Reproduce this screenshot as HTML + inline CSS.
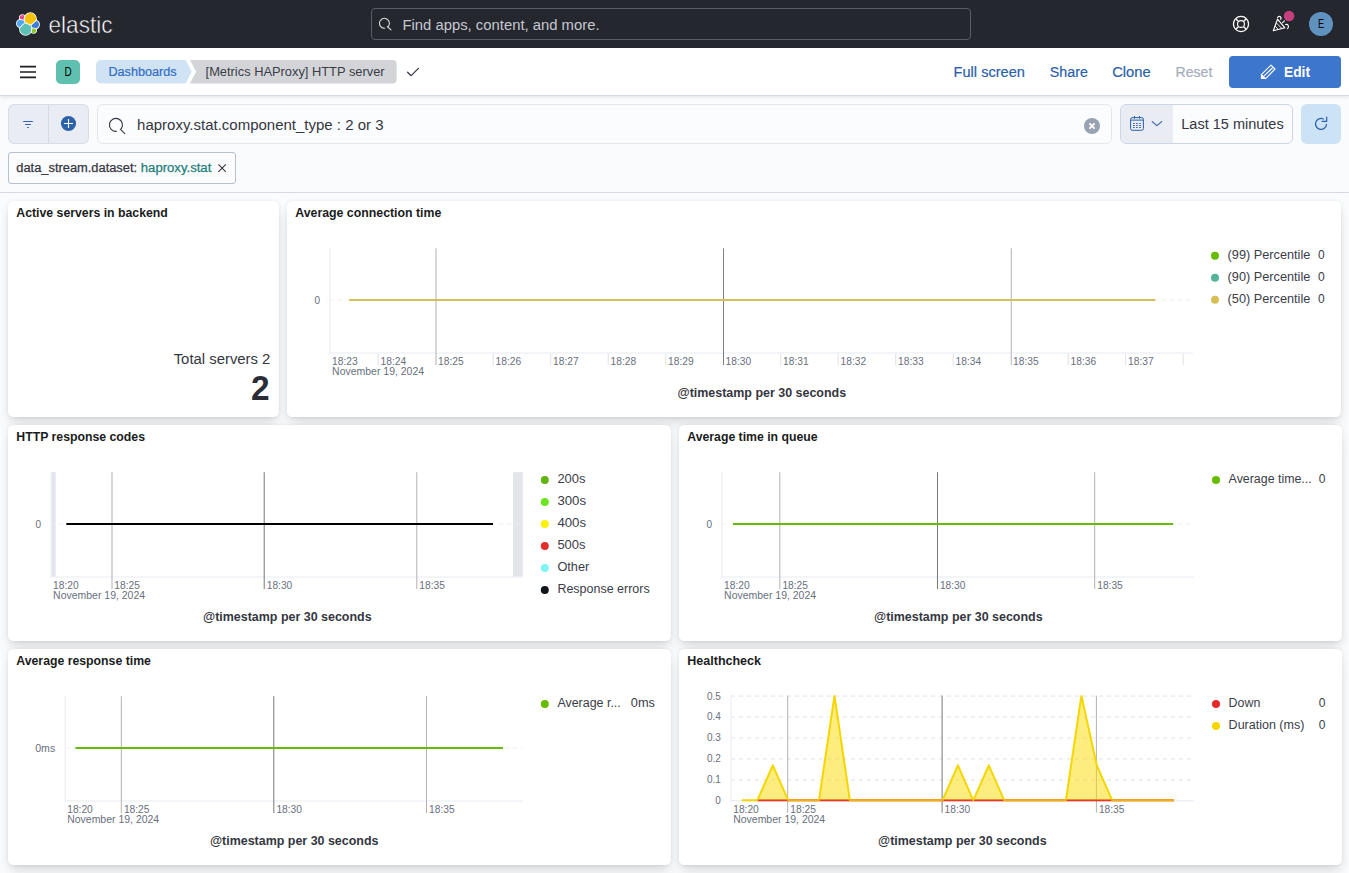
<!DOCTYPE html>
<html lang="en">
<head>
<meta charset="utf-8">
<title>[Metrics HAProxy] HTTP server - Elastic</title>
<style>
*{box-sizing:border-box;margin:0;padding:0}
html,body{width:1349px;height:873px;overflow:hidden}
body{font-family:"Liberation Sans",sans-serif;background:#fafbfd;color:#343741;position:relative}
.abs{position:absolute}
.t{position:absolute;white-space:nowrap;line-height:1}
/* top dark bar */
#top{left:0;top:0;width:1349px;height:48px;background:#25272f}
#search{left:371px;top:8px;width:600px;height:32px;border:1px solid #5a5d69;border-radius:4px;background:#25272f}
/* second bar */
#bar2{left:0;top:48px;width:1349px;height:48px;background:#fff;border-bottom:1px solid #d3dae6;box-shadow:0 2px 3px rgba(0,0,0,.07)}
#badgeD{left:56px;top:60px;width:24px;height:24px;border-radius:5px;background:#5fc0b0}
.lnk{color:#2b63b0;font-size:15px}
#edit{left:1229px;top:56px;width:112px;height:32px;border-radius:4px;background:#3c76cd;color:#fff}
/* query row */
#fgroup{left:8px;top:104px;width:80.6px;height:40px;border-radius:6px;background:#e9edf3;border:1px solid #d8dde8}
#fgroup i{position:absolute;left:39px;top:0;width:1px;height:38px;background:#d3dae6}
#qbar{left:97px;top:104px;width:1015px;height:40px;border-radius:6px;background:#fbfcfd;border:1px solid #e3e7ee}
#dp{left:1120px;top:104px;width:173px;height:40px;border-radius:6px;background:linear-gradient(to right,#e9edf3 52px,#fbfcfd 52px);border:1px solid #cdd5e8;overflow:hidden}
#refresh{left:1301px;top:104px;width:40px;height:40px;border-radius:6px;background:#cce3f5}
#pill{left:8px;top:152px;width:228px;height:32px;border-radius:3px;background:#fcfcfe;border:1px solid #b8c0d2}
#sep{left:0;top:192px;width:1349px;height:1px;background:#d3dae6}
/* panels */
.panel{position:absolute;background:#fff;border-radius:5.5px;box-shadow:0 .9px 4px -1px rgba(0,0,0,.08),0 2.6px 8px -1px rgba(0,0,0,.06),0 5.7px 12px -1px rgba(0,0,0,.05),0 15px 15px -1px rgba(0,0,0,.04)}
svg{position:absolute;left:0;top:0;overflow:visible}
svg text{font-family:"Liberation Sans",sans-serif}
</style>
</head>
<body>
<!-- ===== TOP BAR ===== -->
<div id="top" class="abs"></div>
<div id="search" class="abs"></div>
<!-- ===== SECOND BAR ===== -->
<div id="bar2" class="abs"></div>
<div id="badgeD" class="abs"></div>
<div id="edit" class="abs"></div>
<!-- ===== QUERY ROW ===== -->
<div id="fgroup" class="abs"><i></i></div>
<div id="qbar" class="abs"></div>
<div id="dp" class="abs"></div>
<div id="refresh" class="abs"></div>
<div id="pill" class="abs"></div>
<div id="sep" class="abs"></div>
<!-- ===== PANELS ===== -->
<div class="panel" id="p1" style="left:8px;top:201px;width:271px;height:216px"></div>
<div class="panel" id="p2" style="left:287px;top:201px;width:1054px;height:216px"></div>
<div class="panel" id="p3" style="left:8px;top:425px;width:663px;height:216px"></div>
<div class="panel" id="p4" style="left:679px;top:425px;width:663px;height:216px"></div>
<div class="panel" id="p5" style="left:8px;top:649px;width:663px;height:216px"></div>
<div class="panel" id="p6" style="left:679px;top:649px;width:663px;height:216px"></div>
<!-- ===== OVERLAY (icons + text) ===== -->
<svg id="ov" width="1349" height="873" viewBox="0 0 1349 873">
<g transform="translate(16,12) scale(0.75)">
<g fill="#fff" stroke="#fff" stroke-width="2.2" stroke-linejoin="round">
<path d="M12.58 13.787l7.002 3.211 7.066-6.213a7.849 7.849 0 00.152-1.557c0-4.287-3.472-7.76-7.754-7.76a7.741 7.741 0 00-6.406 3.388l-1.176 6.123 1.116 2.808z"/>
<path d="M5.333 21.215a7.924 7.924 0 00-.151 1.584c0 4.299 3.486 7.797 7.771 7.797a7.742 7.742 0 006.417-3.408l1.166-6.096-1.556-2.986-7.03-3.216-6.617 6.325z"/>
<path d="M5.29 9.067l4.8 1.137L11.14 4.73a3.785 3.785 0 00-2.313-.787 3.815 3.815 0 00-3.806 3.816c0 .46.087.9.268 1.307"/>
<path d="M4.872 10.214C2.73 10.925 1.234 12.987 1.234 15.26a5.33 5.33 0 003.416 4.98l6.734-6.107-1.237-2.65-5.275-1.27z"/>
<path d="M20.874 27.189a3.76 3.76 0 002.3.79 3.815 3.815 0 003.806-3.815c0-.46-.087-.9-.247-1.307l-4.795-1.126-1.064 5.458z"/>
<path d="M21.85 20.564l5.279 1.238c2.147-.708 3.638-2.773 3.638-5.05a5.323 5.323 0 00-3.423-4.973l-6.905 6.068 1.41 2.717z"/>
</g>
<path fill="#f5c30e" d="M12.58 13.787l7.002 3.211 7.066-6.213a7.849 7.849 0 00.152-1.557c0-4.287-3.472-7.76-7.754-7.76a7.741 7.741 0 00-6.406 3.388l-1.176 6.123 1.116 2.808z"/>
<path fill="#5cc0b5" d="M5.333 21.215a7.924 7.924 0 00-.151 1.584c0 4.299 3.486 7.797 7.771 7.797a7.742 7.742 0 006.417-3.408l1.166-6.096-1.556-2.986-7.03-3.216-6.617 6.325z"/>
<path fill="#e9488d" d="M5.29 9.067l4.8 1.137L11.14 4.73a3.785 3.785 0 00-2.313-.787 3.815 3.815 0 00-3.806 3.816c0 .46.087.9.268 1.307"/>
<path fill="#4aa8f5" d="M4.872 10.214C2.73 10.925 1.234 12.987 1.234 15.26a5.33 5.33 0 003.416 4.98l6.734-6.107-1.237-2.65-5.275-1.27z"/>
<path fill="#8cc627" d="M20.874 27.189a3.76 3.76 0 002.3.79 3.815 3.815 0 003.806-3.815c0-.46-.087-.9-.247-1.307l-4.795-1.126-1.064 5.458z"/>
<path fill="#3d7dd6" d="M21.85 20.564l5.279 1.238c2.147-.708 3.638-2.773 3.638-5.05a5.323 5.323 0 00-3.423-4.973l-6.905 6.068 1.41 2.717z"/>
</g>
<text x="48.5" y="33.2" font-size="24" fill="#fff" textLength="64" lengthAdjust="spacingAndGlyphs" stroke="#25272f" stroke-width=".55">elastic</text>
<g fill="none" stroke="#dcdde2" stroke-width="1.1" stroke-linecap="round"><path d="M384.7 28.3A5 5 0 1 1 388.5 26.2"/><path d="M387.3 26.5L391 29.9"/></g>
<text x="402.5" y="29.7" font-size="14" fill="#c6c8cf" textLength="197" lengthAdjust="spacingAndGlyphs">Find apps, content, and more.</text>
<g fill="none" stroke="#fff"><circle cx="1241" cy="24" r="7.55" stroke-width="1.3"/><circle cx="1241" cy="24" r="3.45" stroke-width="1.15"/><path d="M1238 21l-2-2M1244 21l2-2M1238 27l-2 2M1244 27l2 2" stroke-width="1.5"/></g>
<g fill="none" stroke="#fff" stroke-width="1.15" stroke-linejoin="round" stroke-linecap="round"><path d="M1277.5 19.2L1273.3 30.7L1284.9 27.8Z"/><path d="M1276.9 23.4L1281.8 28.5M1275.5 26.4L1278.2 29.3" stroke-width="0.9"/><path d="M1277.6 17.6C1278.6 15.4 1281.8 16.2 1280.8 19.4M1285.6 24.6C1288 23.8 1289.6 26.4 1287.6 28.6M1284.4 20.8L1282.6 22.6" stroke-width="1.1"/></g>
<circle cx="1289.05" cy="16" r="5.25" fill="#c4407c"/>
<circle cx="1321" cy="24" r="12" fill="#6092c0"/>
<text x="1318" y="28" font-size="12.5" fill="#000" textLength="6.1" lengthAdjust="spacingAndGlyphs">E</text>
<g stroke="#1d1e24" stroke-width="1.6"><path d="M20 66.6H36M20 72H36M20 77.4H36"/></g>
<text x="64.5" y="76.2" font-size="12" fill="#000" textLength="7.2" lengthAdjust="spacingAndGlyphs">D</text>
<path d="M101 60H185.6L191.7 71.75L185.6 83.5H101a5 5 0 0 1-5-5V65a5 5 0 0 1 5-5Z" fill="#d0e3f5"/>
<path d="M190 60H392.6a4 4 0 0 1 4 4V79.5a4 4 0 0 1-4 4H190L196.1 71.75Z" fill="#d3d4d8"/>
<text x="108.4" y="76" font-size="12" fill="#326ec3" textLength="68.2" lengthAdjust="spacingAndGlyphs" stroke="#326ec3" stroke-width="0.2">Dashboards</text>
<text x="205.6" y="76" font-size="12" fill="#3a3d46" textLength="179" lengthAdjust="spacingAndGlyphs">[Metrics HAProxy] HTTP server</text>
<path d="M407.6 72.2L411.2 75.7L418.4 68.3" fill="none" stroke="#343741" stroke-width="1.2" stroke-linecap="round" stroke-linejoin="round"/>
<text x="953.6" y="77" font-size="14" fill="#2b5fa9" textLength="71.3" lengthAdjust="spacingAndGlyphs" stroke="#2b5fa9" stroke-width="0.2">Full screen</text>
<text x="1049.8" y="77" font-size="14" fill="#2b5fa9" textLength="38" lengthAdjust="spacingAndGlyphs" stroke="#2b5fa9" stroke-width="0.2">Share</text>
<text x="1112.2" y="77" font-size="14" fill="#2b5fa9" textLength="38.5" lengthAdjust="spacingAndGlyphs" stroke="#2b5fa9" stroke-width="0.2">Clone</text>
<text x="1175.6" y="77" font-size="14" fill="#a4adbb" textLength="36.7" lengthAdjust="spacingAndGlyphs" stroke="#a4adbb" stroke-width="0.2">Reset</text>
<text x="1284" y="77" font-size="14" fill="#fff" font-weight="700" textLength="26" lengthAdjust="spacingAndGlyphs">Edit</text>
<g fill="none" stroke="#fff" stroke-width="1.1" stroke-linejoin="round" stroke-linecap="round"><path d="M1271 65.2L1275 69L1265.6 78.7L1261.3 74.7Z"/><path d="M1264.1 75.8L1272.4 68"/></g><path d="M1260.9 74.6L1265.7 78.9L1260.9 79Z" fill="#fff"/>
<g fill="#2b60aa"><rect x="23" y="121" width="10" height="1" rx=".4"/><rect x="25" y="124" width="6" height="1" rx=".4"/><rect x="27" y="127" width="2" height="1" rx=".4"/></g>
<circle cx="68.5" cy="123.5" r="7.6" fill="#2e62a8"/><path d="M64 123.5H73M68.5 119V128" stroke="#fff" stroke-width="1.1" fill="none"/>
<g fill="none" stroke="#343741" stroke-width="1.1" stroke-linecap="round"><path d="M116.4 131.4A6.5 6.5 0 1 1 121.3 128.6"/><path d="M120.3 129.2L124.8 133.7"/></g>
<text x="137.1" y="130.4" font-size="14" fill="#343741" textLength="246.4" lengthAdjust="spacingAndGlyphs">haproxy.stat.component_type : 2 or 3</text>
<circle cx="1092" cy="126" r="8" fill="#98a2b3"/><path d="M1089.4 123.4l5.2 5.2M1094.6 123.4l-5.2 5.2" stroke="#fff" stroke-width="1.9" fill="none"/>
<rect x="1130.6" y="117.6" width="12.8" height="12.7" rx="1.8" fill="none" stroke="#2b5fa9" stroke-width="1"/>
<g fill="#2b5fa9"><rect x="1130.6" y="119.6" width="12.8" height="1"/><rect x="1133.9" y="116" width="1" height="2.6"/><rect x="1139" y="116" width="1" height="2.6"/><rect x="1133.00" y="123.05" width="1.8" height="0.9"/><rect x="1136.05" y="123.05" width="1.8" height="0.9"/><rect x="1139.10" y="123.05" width="1.8" height="0.9"/><rect x="1133.00" y="125.05" width="1.8" height="0.9"/><rect x="1136.05" y="125.05" width="1.8" height="0.9"/><rect x="1139.10" y="125.05" width="1.8" height="0.9"/><rect x="1133.00" y="127.05" width="1.8" height="0.9"/><rect x="1136.05" y="127.05" width="1.8" height="0.9"/><rect x="1139.10" y="127.05" width="1.8" height="0.9"/></g>
<path d="M1152.2 121.6L1156.9 125.7L1161.7 121.6" fill="none" stroke="#2b5fa9" stroke-width="1.1" stroke-linecap="round" stroke-linejoin="round"/>
<text x="1181.3" y="129" font-size="14" fill="#343741" textLength="102.4" lengthAdjust="spacingAndGlyphs">Last 15 minutes</text>
<g fill="none" stroke="#2b5fa9" stroke-width="1.2" stroke-linecap="round" stroke-linejoin="round"><path d="M1326.5 124.3A5.5 5.5 0 1 1 1323.4 118.95"/><path d="M1326.7 117.2V121.3H1322.2"/></g>
<text x="16.3" y="171.8" font-size="12" fill="#343741" textLength="120.8" lengthAdjust="spacingAndGlyphs" stroke="#343741" stroke-width="0.25">data_stream.dataset:</text>
<text x="140.8" y="171.8" font-size="12" fill="#1f7f7a" textLength="70.5" lengthAdjust="spacingAndGlyphs" stroke="#1f7f7a" stroke-width="0.25">haproxy.stat</text>
<path d="M218.4 164.4l7.4 7.4M225.8 164.4l-7.4 7.4" stroke="#343741" stroke-width="1.1" fill="none"/>
<text x="16.3" y="216.8" font-size="12" fill="#1a1c21" font-weight="700" textLength="151.5" lengthAdjust="spacingAndGlyphs">Active servers in backend</text>
<text x="295.3" y="216.8" font-size="12" fill="#1a1c21" font-weight="700" textLength="146" lengthAdjust="spacingAndGlyphs">Average connection time</text>
<text x="16.3" y="440.8" font-size="12" fill="#1a1c21" font-weight="700" textLength="128.7" lengthAdjust="spacingAndGlyphs">HTTP response codes</text>
<text x="687.3" y="440.8" font-size="12" fill="#1a1c21" font-weight="700" textLength="130.3" lengthAdjust="spacingAndGlyphs">Average time in queue</text>
<text x="16.3" y="664.8" font-size="12" fill="#1a1c21" font-weight="700" textLength="134.6" lengthAdjust="spacingAndGlyphs">Average response time</text>
<text x="687.3" y="664.8" font-size="12" fill="#1a1c21" font-weight="700" textLength="73.7" lengthAdjust="spacingAndGlyphs">Healthcheck</text>
<text x="270.4" y="364.1" font-size="14" fill="#343741" text-anchor="end" textLength="96.7" lengthAdjust="spacingAndGlyphs">Total servers 2</text>
<text x="269.5" y="400" font-size="35" fill="#2b2d36" font-weight="700" text-anchor="end" textLength="18.6" lengthAdjust="spacingAndGlyphs">2</text>
<rect x="329.40" y="248.3" width="1.2" height="105.30" fill="#eceef4"/>
<rect x="329.4" y="352.40" width="863.60" height="1.2" fill="#eceef4"/>
<path d="M330 300H1193" stroke="#eceef3" stroke-width="1" stroke-dasharray="4 4" fill="none"/>
<rect x="377.70" y="353.6" width="1" height="11.60" fill="#dfe1e7"/>
<rect x="492.70" y="353.6" width="1" height="11.60" fill="#dfe1e7"/>
<rect x="550.20" y="353.6" width="1" height="11.60" fill="#dfe1e7"/>
<rect x="607.70" y="353.6" width="1" height="11.60" fill="#dfe1e7"/>
<rect x="665.20" y="353.6" width="1" height="11.60" fill="#dfe1e7"/>
<rect x="780.20" y="353.6" width="1" height="11.60" fill="#dfe1e7"/>
<rect x="837.70" y="353.6" width="1" height="11.60" fill="#dfe1e7"/>
<rect x="895.20" y="353.6" width="1" height="11.60" fill="#dfe1e7"/>
<rect x="952.70" y="353.6" width="1" height="11.60" fill="#dfe1e7"/>
<rect x="1067.70" y="353.6" width="1" height="11.60" fill="#dfe1e7"/>
<rect x="1125.20" y="353.6" width="1" height="11.60" fill="#dfe1e7"/>
<rect x="1182.70" y="353.6" width="1" height="11.60" fill="#dfe1e7"/>
<rect x="435.50" y="248.3" width="1.0" height="116.70" fill="#b2b2b2"/>
<rect x="723.00" y="248.3" width="1.0" height="116.70" fill="#808080"/>
<rect x="1010.75" y="248.3" width="1.0" height="116.70" fill="#b2b2b2"/>
<text x="332.1" y="365.0" font-size="10" fill="#69707d" textLength="25.6" lengthAdjust="spacingAndGlyphs">18:23</text>
<text x="380.6" y="365.0" font-size="10" fill="#69707d" textLength="25.6" lengthAdjust="spacingAndGlyphs">18:24</text>
<text x="438.1" y="365.0" font-size="10" fill="#69707d" textLength="25.6" lengthAdjust="spacingAndGlyphs">18:25</text>
<text x="495.6" y="365.0" font-size="10" fill="#69707d" textLength="25.6" lengthAdjust="spacingAndGlyphs">18:26</text>
<text x="553.1" y="365.0" font-size="10" fill="#69707d" textLength="25.6" lengthAdjust="spacingAndGlyphs">18:27</text>
<text x="610.6" y="365.0" font-size="10" fill="#69707d" textLength="25.6" lengthAdjust="spacingAndGlyphs">18:28</text>
<text x="668.1" y="365.0" font-size="10" fill="#69707d" textLength="25.6" lengthAdjust="spacingAndGlyphs">18:29</text>
<text x="725.6" y="365.0" font-size="10" fill="#69707d" textLength="25.6" lengthAdjust="spacingAndGlyphs">18:30</text>
<text x="783.1" y="365.0" font-size="10" fill="#69707d" textLength="25.6" lengthAdjust="spacingAndGlyphs">18:31</text>
<text x="840.6" y="365.0" font-size="10" fill="#69707d" textLength="25.6" lengthAdjust="spacingAndGlyphs">18:32</text>
<text x="898.1" y="365.0" font-size="10" fill="#69707d" textLength="25.6" lengthAdjust="spacingAndGlyphs">18:33</text>
<text x="955.6" y="365.0" font-size="10" fill="#69707d" textLength="25.6" lengthAdjust="spacingAndGlyphs">18:34</text>
<text x="1013.1" y="365.0" font-size="10" fill="#69707d" textLength="25.6" lengthAdjust="spacingAndGlyphs">18:35</text>
<text x="1070.6" y="365.0" font-size="10" fill="#69707d" textLength="25.6" lengthAdjust="spacingAndGlyphs">18:36</text>
<text x="1128.1" y="365.0" font-size="10" fill="#69707d" textLength="25.6" lengthAdjust="spacingAndGlyphs">18:37</text>
<text x="332.1" y="375.3" font-size="10" fill="#69707d" textLength="92" lengthAdjust="spacingAndGlyphs">November 19, 2024</text>
<text x="320" y="304.2" font-size="10" fill="#69707d" text-anchor="end">0</text>
<text x="677.5" y="397.2" font-size="12" fill="#343741" font-weight="700" textLength="168.6" lengthAdjust="spacingAndGlyphs">@timestamp per 30 seconds</text>
<path d="M349.3 300H1155.3" stroke="#d6bf57" stroke-width="2" fill="none"/>
<circle cx="1215" cy="255.7" r="4" fill="#68bc00"/>
<text x="1227.6" y="258.8" font-size="12" fill="#3a3d47" textLength="82.7" lengthAdjust="spacingAndGlyphs">(99) Percentile</text>
<text x="1324.8" y="258.8" font-size="12" fill="#3a3d47" text-anchor="end">0</text>
<circle cx="1215" cy="277.7" r="4" fill="#54b399"/>
<text x="1227.6" y="280.8" font-size="12" fill="#3a3d47" textLength="82.7" lengthAdjust="spacingAndGlyphs">(90) Percentile</text>
<text x="1324.8" y="280.8" font-size="12" fill="#3a3d47" text-anchor="end">0</text>
<circle cx="1215" cy="299.7" r="4" fill="#d6bf57"/>
<text x="1227.6" y="302.8" font-size="12" fill="#3a3d47" textLength="82.7" lengthAdjust="spacingAndGlyphs">(50) Percentile</text>
<text x="1324.8" y="302.8" font-size="12" fill="#3a3d47" text-anchor="end">0</text>
<rect x="50.9" y="472.2" width="4.8" height="104.5" fill="#e4e5ea"/><rect x="513" y="472.2" width="9.8" height="104.5" fill="#e4e5ea"/>
<rect x="50.60" y="472.2" width="1.2" height="105.40" fill="#eceef4"/>
<rect x="50.6" y="576.40" width="472.20" height="1.2" fill="#eceef4"/>
<path d="M51.2 524H522.8" stroke="#eceef3" stroke-width="1" stroke-dasharray="4 4" fill="none"/>
<rect x="111.50" y="472.2" width="1.0" height="116.80" fill="#b2b2b2"/>
<rect x="263.70" y="472.2" width="1.0" height="116.80" fill="#787878"/>
<rect x="416.30" y="472.2" width="1.0" height="116.80" fill="#b2b2b2"/>
<text x="53.1" y="589.0" font-size="10" fill="#69707d" textLength="25.6" lengthAdjust="spacingAndGlyphs">18:20</text>
<text x="114.3" y="589.0" font-size="10" fill="#69707d" textLength="25.6" lengthAdjust="spacingAndGlyphs">18:25</text>
<text x="266.7" y="589.0" font-size="10" fill="#69707d" textLength="25.6" lengthAdjust="spacingAndGlyphs">18:30</text>
<text x="419.3" y="589.0" font-size="10" fill="#69707d" textLength="25.6" lengthAdjust="spacingAndGlyphs">18:35</text>
<text x="53.1" y="599.3" font-size="10" fill="#69707d" textLength="92" lengthAdjust="spacingAndGlyphs">November 19, 2024</text>
<text x="41" y="528.2" font-size="10" fill="#69707d" text-anchor="end">0</text>
<text x="203" y="621.2" font-size="12" fill="#343741" font-weight="700" textLength="168.6" lengthAdjust="spacingAndGlyphs">@timestamp per 30 seconds</text>
<path d="M66.3 524H493" stroke="#000" stroke-width="2" fill="none"/>
<circle cx="544.8" cy="480" r="4" fill="#64b20e"/>
<text x="557.4" y="483.1" font-size="12" fill="#3a3d47" textLength="28.1" lengthAdjust="spacingAndGlyphs">200s</text>
<circle cx="544.8" cy="502" r="4" fill="#6be51d"/>
<text x="557.4" y="505.1" font-size="12" fill="#3a3d47" textLength="28.7" lengthAdjust="spacingAndGlyphs">300s</text>
<circle cx="544.8" cy="524" r="4" fill="#fcf003"/>
<text x="557.4" y="527.1" font-size="12" fill="#3a3d47" textLength="28.7" lengthAdjust="spacingAndGlyphs">400s</text>
<circle cx="544.8" cy="546" r="4" fill="#e32d2d"/>
<text x="557.4" y="549.1" font-size="12" fill="#3a3d47" textLength="28.1" lengthAdjust="spacingAndGlyphs">500s</text>
<circle cx="544.8" cy="568" r="4" fill="#7ff5fa"/>
<text x="557.4" y="571.1" font-size="12" fill="#3a3d47" textLength="31.8" lengthAdjust="spacingAndGlyphs">Other</text>
<circle cx="544.8" cy="590" r="4" fill="#11161b"/>
<text x="557.4" y="593.1" font-size="12" fill="#3a3d47" textLength="92.3" lengthAdjust="spacingAndGlyphs">Response errors</text>
<rect x="721.40" y="472.2" width="1.2" height="105.40" fill="#eceef4"/>
<rect x="721.4" y="576.40" width="472.60" height="1.2" fill="#eceef4"/>
<path d="M722 524H1194" stroke="#eceef3" stroke-width="1" stroke-dasharray="4 4" fill="none"/>
<rect x="779.30" y="472.2" width="1.0" height="116.80" fill="#b2b2b2"/>
<rect x="937.00" y="472.2" width="1.0" height="116.80" fill="#787878"/>
<rect x="1094.20" y="472.2" width="1.0" height="116.80" fill="#b2b2b2"/>
<text x="724.1" y="589.0" font-size="10" fill="#69707d" textLength="25.6" lengthAdjust="spacingAndGlyphs">18:20</text>
<text x="782.4" y="589.0" font-size="10" fill="#69707d" textLength="25.6" lengthAdjust="spacingAndGlyphs">18:25</text>
<text x="939.9" y="589.0" font-size="10" fill="#69707d" textLength="25.6" lengthAdjust="spacingAndGlyphs">18:30</text>
<text x="1097.2" y="589.0" font-size="10" fill="#69707d" textLength="25.6" lengthAdjust="spacingAndGlyphs">18:35</text>
<text x="724.1" y="599.3" font-size="10" fill="#69707d" textLength="92" lengthAdjust="spacingAndGlyphs">November 19, 2024</text>
<text x="712" y="528.2" font-size="10" fill="#69707d" text-anchor="end">0</text>
<text x="874" y="621.2" font-size="12" fill="#343741" font-weight="700" textLength="168.6" lengthAdjust="spacingAndGlyphs">@timestamp per 30 seconds</text>
<path d="M733 524H1173.1" stroke="#68bc00" stroke-width="2" fill="none"/>
<circle cx="1216" cy="480" r="4" fill="#68bc00"/>
<text x="1228.6" y="483.1" font-size="12" fill="#3a3d47" textLength="83.1" lengthAdjust="spacingAndGlyphs">Average time...</text>
<text x="1325.5" y="483.1" font-size="12" fill="#3a3d47" text-anchor="end">0</text>
<rect x="64.60" y="696.2" width="1.2" height="105.40" fill="#eceef4"/>
<rect x="64.60000000000001" y="800.40" width="458.40" height="1.2" fill="#eceef4"/>
<path d="M65.2 748H523" stroke="#eceef3" stroke-width="1" stroke-dasharray="4 4" fill="none"/>
<rect x="120.80" y="696.2" width="1.0" height="116.80" fill="#b2b2b2"/>
<rect x="273.30" y="696.2" width="1.0" height="116.80" fill="#787878"/>
<rect x="426.00" y="696.2" width="1.0" height="116.80" fill="#b2b2b2"/>
<text x="67.2" y="813.0" font-size="10" fill="#69707d" textLength="25.6" lengthAdjust="spacingAndGlyphs">18:20</text>
<text x="123.9" y="813.0" font-size="10" fill="#69707d" textLength="25.6" lengthAdjust="spacingAndGlyphs">18:25</text>
<text x="276.4" y="813.0" font-size="10" fill="#69707d" textLength="25.6" lengthAdjust="spacingAndGlyphs">18:30</text>
<text x="429" y="813.0" font-size="10" fill="#69707d" textLength="25.6" lengthAdjust="spacingAndGlyphs">18:35</text>
<text x="67.2" y="823.3" font-size="10" fill="#69707d" textLength="92" lengthAdjust="spacingAndGlyphs">November 19, 2024</text>
<text x="55.2" y="752.2" font-size="10" fill="#69707d" text-anchor="end" textLength="20" lengthAdjust="spacingAndGlyphs">0ms</text>
<text x="209.9" y="845.2" font-size="12" fill="#343741" font-weight="700" textLength="168.6" lengthAdjust="spacingAndGlyphs">@timestamp per 30 seconds</text>
<path d="M75.4 748H503" stroke="#68bc00" stroke-width="2" fill="none"/>
<circle cx="544.8" cy="704" r="4" fill="#68bc00"/>
<text x="557.4" y="707.1" font-size="12" fill="#3a3d47" textLength="63.4" lengthAdjust="spacingAndGlyphs">Average r...</text>
<text x="654.9" y="707.1" font-size="12" fill="#3a3d47" text-anchor="end" textLength="24.1" lengthAdjust="spacingAndGlyphs">0ms</text>
<path d="M731 800.8H1193.6" stroke="#eceef5" stroke-width="1.6" stroke-dasharray="4 4" fill="none"/>
<path d="M731 779.9H1193.6" stroke="#eceef5" stroke-width="1.6" stroke-dasharray="4 4" fill="none"/>
<path d="M731 758.9H1193.6" stroke="#eceef5" stroke-width="1.6" stroke-dasharray="4 4" fill="none"/>
<path d="M731 738.0H1193.6" stroke="#eceef5" stroke-width="1.6" stroke-dasharray="4 4" fill="none"/>
<path d="M731 717.0H1193.6" stroke="#eceef5" stroke-width="1.6" stroke-dasharray="4 4" fill="none"/>
<path d="M731 696.1H1193.6" stroke="#eceef5" stroke-width="1.6" stroke-dasharray="4 4" fill="none"/>
<rect x="730.40" y="695.6" width="1.2" height="105.70" fill="#eceef4"/>
<rect x="730.4" y="800.10" width="463.20" height="1.2" fill="#eceef4"/>
<rect x="787.20" y="695.6" width="1.0" height="117.10" fill="#b2b2b2"/>
<rect x="941.60" y="695.6" width="1.0" height="117.10" fill="#787878"/>
<rect x="1095.90" y="695.6" width="1.0" height="117.10" fill="#b2b2b2"/>
<text x="733.2" y="812.7" font-size="10" fill="#69707d" textLength="25.6" lengthAdjust="spacingAndGlyphs">18:20</text>
<text x="790.3" y="812.7" font-size="10" fill="#69707d" textLength="25.6" lengthAdjust="spacingAndGlyphs">18:25</text>
<text x="944.6" y="812.7" font-size="10" fill="#69707d" textLength="25.6" lengthAdjust="spacingAndGlyphs">18:30</text>
<text x="1098.9" y="812.7" font-size="10" fill="#69707d" textLength="25.6" lengthAdjust="spacingAndGlyphs">18:35</text>
<text x="733.2" y="823.0" font-size="10" fill="#69707d" textLength="92" lengthAdjust="spacingAndGlyphs">November 19, 2024</text>
<text x="720.8" y="804.2" font-size="10" fill="#69707d" text-anchor="end">0</text>
<text x="720.8" y="783.3" font-size="10" fill="#69707d" text-anchor="end">0.1</text>
<text x="720.8" y="762.3" font-size="10" fill="#69707d" text-anchor="end">0.2</text>
<text x="720.8" y="741.4" font-size="10" fill="#69707d" text-anchor="end">0.3</text>
<text x="720.8" y="720.4" font-size="10" fill="#69707d" text-anchor="end">0.4</text>
<text x="720.8" y="699.5" font-size="10" fill="#69707d" text-anchor="end">0.5</text>
<text x="878" y="845.2" font-size="12" fill="#343741" font-weight="700" textLength="168.6" lengthAdjust="spacingAndGlyphs">@timestamp per 30 seconds</text>
<clipPath id="hc"><rect x="731" y="695.2" width="470" height="106.69999999999993"/></clipPath><g clip-path="url(#hc)">
<path d="M757.3 800.3H1173.9" stroke="#e7292b" stroke-width="2" fill="none"/>
<polygon points="741.9,800.3 741.9,800.3 757.3,800.3 772.8,765.4 788.2,800.3 803.6,800.3 819.0,800.3 834.5,695.6 849.9,800.3 865.3,800.3 880.8,800.3 896.2,800.3 911.6,800.3 927.1,800.3 942.5,800.3 957.9,765.4 973.3,800.3 988.8,765.4 1004.2,800.3 1019.6,800.3 1035.1,800.3 1050.5,800.3 1065.9,800.3 1081.4,695.6 1096.8,765.4 1112.2,800.3 1127.7,800.3 1143.1,800.3 1158.5,800.3 1173.9,800.3 1173.9,800.3" fill="#fcdc00" fill-opacity="0.5"/>
<polyline points="741.9,800.3 757.3,800.3 772.8,765.4 788.2,800.3 803.6,800.3 819.0,800.3 834.5,695.6 849.9,800.3 865.3,800.3 880.8,800.3 896.2,800.3 911.6,800.3 927.1,800.3 942.5,800.3 957.9,765.4 973.3,800.3 988.8,765.4 1004.2,800.3 1019.6,800.3 1035.1,800.3 1050.5,800.3 1065.9,800.3 1081.4,695.6 1096.8,765.4 1112.2,800.3 1127.7,800.3 1143.1,800.3 1158.5,800.3 1173.9,800.3" stroke="#f5d600" stroke-width="2" fill="none" stroke-linejoin="round"/>
<path d="M757.3 800.3H1173.9" stroke="#e7292b" stroke-opacity="0.2" stroke-width="2" fill="none"/></g>
<circle cx="1216" cy="704" r="4" fill="#e7292b"/>
<text x="1228.6" y="707.1" font-size="12" fill="#3a3d47" textLength="31.7" lengthAdjust="spacingAndGlyphs">Down</text>
<text x="1325.5" y="707.1" font-size="12" fill="#3a3d47" text-anchor="end">0</text>
<circle cx="1216" cy="726" r="4" fill="#f5d600"/>
<text x="1228.6" y="729.1" font-size="12" fill="#3a3d47" textLength="75.8" lengthAdjust="spacingAndGlyphs">Duration (ms)</text>
<text x="1325.5" y="729.1" font-size="12" fill="#3a3d47" text-anchor="end">0</text>
</svg>
</body>
</html>
